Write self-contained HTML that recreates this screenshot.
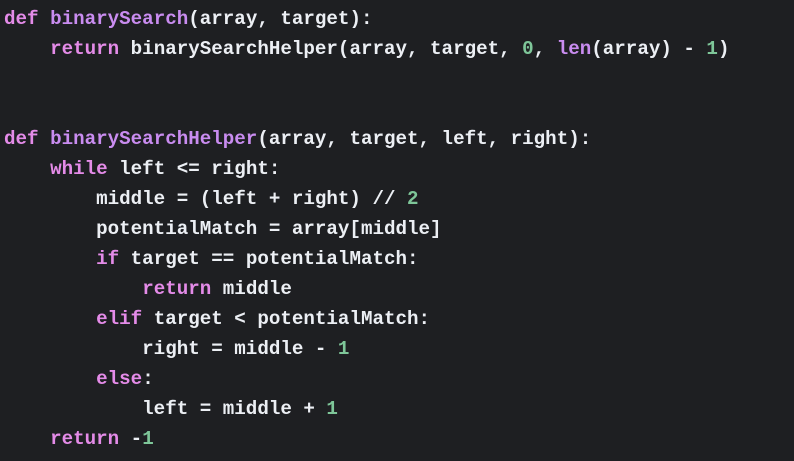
<!DOCTYPE html>
<html><head><style>
html,body{margin:0;padding:0;background:#1e1f22;width:794px;height:461px;overflow:hidden}
pre{margin:0;padding:4px 0 0 4px;font-family:"Liberation Mono",monospace;font-size:19.2px;line-height:30px;color:#eceff4;font-weight:bold}
.k{color:#e48be8}.f{color:#c98cf0}.n{color:#7ec699}
</style></head><body><pre><span class="k">def</span> <span class="f">binarySearch</span>(array, target):
    <span class="k">return</span> binarySearchHelper(array, target, <span class="n">0</span>, <span class="f">len</span>(array) - <span class="n">1</span>)


<span class="k">def</span> <span class="f">binarySearchHelper</span>(array, target, left, right):
    <span class="k">while</span> left &lt;= right:
        middle = (left + right) // <span class="n">2</span>
        potentialMatch = array[middle]
        <span class="k">if</span> target == potentialMatch:
            <span class="k">return</span> middle
        <span class="k">elif</span> target &lt; potentialMatch:
            right = middle - <span class="n">1</span>
        <span class="k">else</span>:
            left = middle + <span class="n">1</span>
    <span class="k">return</span> -<span class="n">1</span>
</pre></body></html>
